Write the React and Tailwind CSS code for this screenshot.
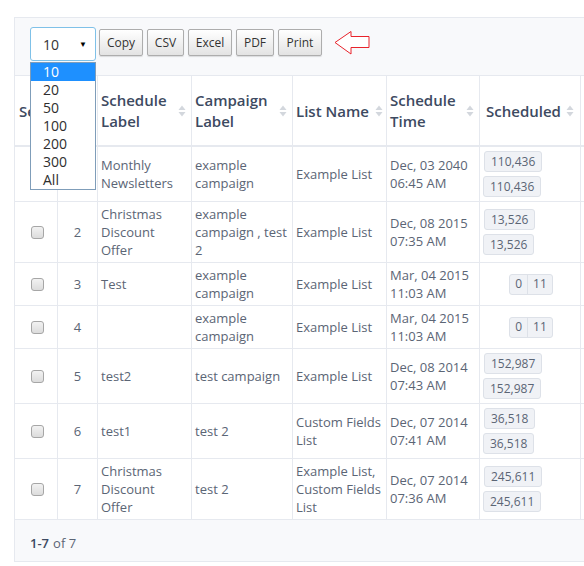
import React from 'react';

const cols = 'grid grid-cols-[43px_40px_94px_101px_94px_93px_101px_140px]';

const rows = [
  { n: 1, label: ['Monthly', 'Newsletters'], camp: ['example', 'campaign'], list: ['Example List'], time: ['Dec, 03 2040', '06:45 AM'], sched: ['110,436', '110,436'] },
  { n: 2, label: ['Christmas', 'Discount', 'Offer'], camp: ['example', 'campaign , test', '2'], list: ['Example List'], time: ['Dec, 08 2015', '07:35 AM'], sched: ['13,526', '13,526'] },
  { n: 3, label: ['Test'], camp: ['example', 'campaign'], list: ['Example List'], time: ['Mar, 04 2015', '11:03 AM'], pair: ['0', '11'] },
  { n: 4, label: [], camp: ['example', 'campaign'], list: ['Example List'], time: ['Mar, 04 2015', '11:03 AM'], pair: ['0', '11'] },
  { n: 5, label: ['test2'], camp: ['test campaign'], list: ['Example List'], time: ['Dec, 08 2014', '07:43 AM'], sched: ['152,987', '152,987'] },
  { n: 6, label: ['test1'], camp: ['test 2'], list: ['Custom Fields', 'List'], time: ['Dec, 07 2014', '07:41 AM'], sched: ['36,518', '36,518'] },
  { n: 7, label: ['Christmas', 'Discount', 'Offer'], camp: ['test 2'], list: ['Example List,', 'Custom Fields', 'List'], time: ['Dec, 07 2014', '07:36 AM'], sched: ['245,611', '245,611'] },
];

function SortIcon() {
  return (
    <svg width="8" height="14" viewBox="0 0 8 14" className="shrink-0">
      <polygon points="0.5,6 4,1.5 7.5,6" fill="#d3d7dd" />
      <polygon points="0.5,8 4,12.5 7.5,8" fill="#d3d7dd" />
    </svg>
  );
}

function Lines({ lines }) {
  return (
    <div>
      {lines.map((l, i) => (
        <div key={i} className="whitespace-nowrap">{l}</div>
      ))}
    </div>
  );
}

const badge = 'inline-flex items-center h-[21px] px-[6px] text-[12px] bg-[#f0f2f6] border border-[#dde1e8] rounded-[3px]';

export default function App() {
  const buttons = [
    { t: 'Copy', w: 'w-[44px]' },
    { t: 'CSV', w: 'w-[37px]' },
    { t: 'Excel', w: 'w-[44px]' },
    { t: 'PDF', w: 'w-[38px]' },
    { t: 'Print', w: 'w-[44px]' },
  ];
  const options = ['10', '20', '50', '100', '200', '300', 'All'];
  const cell = 'border-r border-[#e6e9ef] flex items-center px-[3px] py-[3px]';

  return (
    <div className="w-[584px] h-[566px] overflow-hidden bg-white relative font-['Open_Sans',sans-serif]">
      <div className="pt-[17px] pl-[14px]">
        <div className="w-[720px] border border-[#e6e9ef] bg-[#f8f9fb]">
          {/* toolbar */}
          <div className="h-[57px] flex items-start pt-[9px] pl-[15px]">
            <div className="w-[66px] h-[34px] rounded-[3px] border border-[#7fc1e8] bg-white flex items-center justify-between pl-[12px] pr-[8px] text-[14px] text-[#333]">
              <span>10</span>
              <span className="text-[8px] text-black">▼</span>
            </div>
            <div className="flex gap-[4px] ml-[3px] mt-[2px]">
              {buttons.map((b) => (
                <button key={b.t}
                  className={`${b.w} h-[27px] rounded-[2px] border border-[#adadad] bg-gradient-to-b from-white to-[#e3e3e3] shadow-[0_1px_1px_rgba(0,0,0,0.12)] text-[12px] text-[#333] flex items-center justify-center`}>
                  {b.t}
                </button>
              ))}
            </div>
            <svg width="36" height="26" viewBox="0 0 36 26" className="ml-[12px] mt-[3px]">
              <polygon points="1,12.5 17,1.5 17,6.5 35,6.5 35,17.5 17,17.5 17,24" fill="white" stroke="#e8232b" strokeWidth="1" />
            </svg>
          </div>

          {/* header */}
          <div className={`${cols} bg-white border-t border-b-2 border-[#e6e9ef] text-[15px] font-semibold text-[#3d4a61] leading-[21px]`}>
            <div className="border-r border-[#e6e9ef] flex items-center pl-[4px] pt-[14px] pb-[13px] overflow-hidden whitespace-nowrap">Select</div>
            <div className="border-r border-[#e6e9ef]" />
            <div className="border-r border-[#e6e9ef] flex items-center justify-between pl-[3px] pr-[5px] pt-[14px] pb-[13px]"><Lines lines={['Schedule', 'Label']} /><SortIcon /></div>
            <div className="border-r border-[#e6e9ef] flex items-center justify-between pl-[3px] pr-[5px] pt-[14px] pb-[13px]"><Lines lines={['Campaign', 'Label']} /><SortIcon /></div>
            <div className="border-r border-[#e6e9ef] flex items-center justify-between pl-[3px] pr-[3px] pt-[14px] pb-[13px]"><Lines lines={['List Name']} /><SortIcon /></div>
            <div className="border-r border-[#e6e9ef] flex items-center justify-between pl-[3px] pr-[5px] pt-[14px] pb-[13px]"><Lines lines={['Schedule', 'Time']} /><SortIcon /></div>
            <div className="border-r border-[#e6e9ef] flex items-center justify-center gap-[5px] pt-[14px] pb-[13px]"><span>Scheduled</span><SortIcon /></div>
            <div />
          </div>

          {/* body */}
          <div className="bg-white text-[13px] leading-[18px] text-[#5b6575]">
            {rows.map((r) => (
              <div key={r.n} className={`${cols} border-b border-[#e6e9ef]`}>
                <div className={`${cell} justify-center`}>
                  <span className="w-[13px] h-[13px] rounded-[3px] border border-[#a6a6a6] bg-gradient-to-b from-[#f2f2f2] to-[#dcdcdc] ml-[2px]" />
                </div>
                <div className={`${cell} justify-center`}>{r.n}</div>
                <div className={cell}><Lines lines={r.label} /></div>
                <div className={cell}><Lines lines={r.camp} /></div>
                <div className={cell}><Lines lines={r.list} /></div>
                <div className={cell}><Lines lines={r.time} /></div>
                <div className={`${cell} ${r.pair ? 'justify-center' : ''}`}>
                  {r.sched ? (
                    <div className="flex flex-col items-start gap-[4px] py-[1px]">
                      <span className={`${badge} ml-[1px]`}>{r.sched[0]}</span>
                      <span className={badge}>{r.sched[1]}</span>
                    </div>
                  ) : (
                    <span className="inline-flex h-[21px] text-[12px] bg-[#f0f2f6] border border-[#dde1e8] rounded-[3px] ml-[2px]">
                      <span className="px-[5px] flex items-center">{r.pair[0]}</span>
                      <span className="px-[5px] flex items-center border-l border-[#dde1e8]">{r.pair[1]}</span>
                    </span>
                  )}
                </div>
                <div className="px-[8px]" />
              </div>
            ))}
          </div>

          {/* footer */}
          <div className="h-[41px] flex items-center pt-[7px] pl-[15px] text-[13px] text-[#5b6575]">
            <span className="font-semibold text-[#3d4a61]">1-7</span>
            <span className="ml-[4px]">of 7</span>
          </div>
        </div>
      </div>

      {/* open select menu */}
      <div className="absolute left-[30px] top-[62px] w-[66px] border border-[#7f9db9] bg-white text-[14px] leading-[18px] text-[#2e2e2e]">
        {options.map((o) => (
          <div key={o} className={`pl-[12px] h-[18px] ${o === '10' ? 'bg-[#1e90ff] text-white' : ''}`}>{o}</div>
        ))}
      </div>
    </div>
  );
}
